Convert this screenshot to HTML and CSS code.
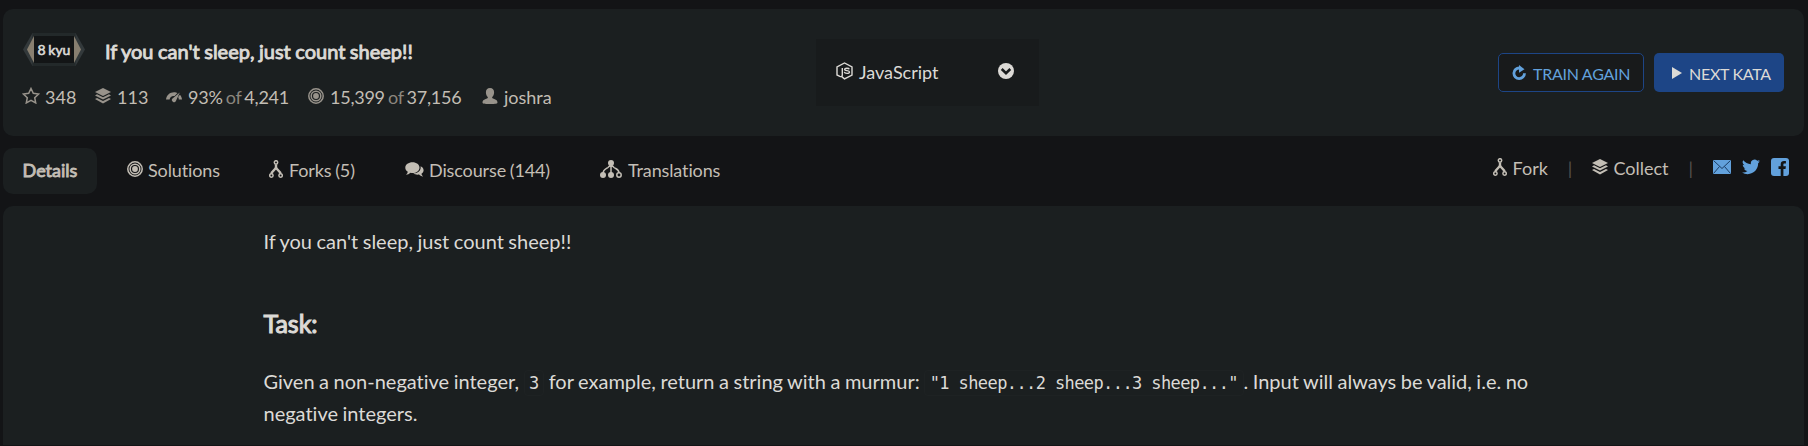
FILE: index.html
```html
<!DOCTYPE html>
<html lang="en">
<head>
<meta charset="utf-8">
<title>If you can't sleep, just count sheep!!</title>
<link rel="stylesheet" href="styles.css">
</head>
<body>
<svg class="defs" width="0" height="0">
  <symbol id="layers" viewBox="0 0 16 16"><path d="M8 0l8 4-8 4-8-4z"/><path d="M2 6.300L0 7.400l8 4 8-4-2-1.100-6 3z"/><path d="M2 9.900l-2 1.100 8 4.500 8-4.500-2-1.100-6 3.200z"/></symbol>
  <symbol id="target" viewBox="0 0 16 16"><g fill="none" stroke="currentColor" stroke-width="1.500"><circle cx="8" cy="8" r="7.200"/><circle cx="8" cy="8" r="4.800"/></g><circle cx="8" cy="8" r="2.900"/></symbol>
  <symbol id="fork" viewBox="0 0 14 18"><g fill="none" stroke="currentColor"><circle cx="7" cy="2.400" r="1.700" stroke-width="1.500"/><circle cx="2.400" cy="15.500" r="1.700" stroke-width="1.500"/><circle cx="11.600" cy="15.500" r="1.700" stroke-width="1.500"/><path stroke-width="2.400" d="M7 4.300v3.500M2.500 13.800c0-3 4.500-3.800 4.500-6.800c0 3 4.500 3.800 4.500 6.800"/></g></symbol>
</svg>
<header class="card">
  <div class="info">
    <div class="heading">
      <span class="rank"><svg class="hex" viewBox="0 0 62 33"><path fill="#33393b" d="M9.500 0H52.500L62 16.500 52.500 33H9.500L0 16.500z"/><path fill="#23292a" d="M9.500 0H52.500V33H9.500z"/><path fill="#887f70" d="M11 3H51L58 16.500 51 30H11L4 16.500z"/><path fill="#131516" d="M11 3h40v27H11z"/></svg><span class="kyu">8 kyu</span></span>
      <h1>If you can't sleep, just count sheep!!</h1>
    </div>
    <div class="stats">
      <span class="stat s1"><svg viewBox="0 0 18 17"><path fill="none" stroke="currentColor" stroke-width="1.500" d="M9 1.500l2.300 4.800 5.300.700-3.900 3.700 1 5.200L9 13.300l-4.700 2.600 1-5.200L1.400 7l5.300-.7z"/></svg>348</span>
      <span class="stat s2"><svg viewBox="0 0 16 16"><use href="#layers"/></svg>113</span>
      <span class="stat s3"><svg viewBox="0 0 16 12"><path d="M0 8.500C.5 4 4 1.200 8 1.200c1.500 0 2.500.3 3.500.8L8.600 5C6 4.500 4 6 3.600 8.500z"/><path d="M13.800 1.500L9.900 10A2.100 2.100 0 1 1 6.500 7.600zM13.900 3.700c1.200 1.200 2 3 2.100 4.800h-3.200c0-1-.3-1.700-.7-2.400z"/></svg><span>93% <i>of</i> 4,241</span></span>
      <span class="stat s4"><svg viewBox="0 0 16 16"><use href="#target"/></svg><span>15,399 <i>of</i> 37,156</span></span>
      <span class="stat s5"><svg viewBox="0 0 16 16"><path d="M8 0c2.700 0 4.100 1.800 4.100 4.300 0 2-.8 4-2 5 0 2 5.400 1.500 5.400 5.200 0 1-1.500 1.500-7.500 1.500S.5 15.500.5 14.500c0-3.700 5.400-3.200 5.400-5.200-1.200-1-2-3-2-5C3.900 1.800 5.300 0 8 0z"/></svg>joshra</span>
    </div>
  </div>
  <div class="language">
    <svg class="js" viewBox="0 0 17 18"><g fill="none" stroke="currentColor" stroke-width="1.400"><path d="M6 14.900L8.500 16.900 16 13V4.900L8.500 1 1 4.900V13l2.800 1.400c1.900.6 2.500-.2 2.500-1.400V6"/><path d="M13.300 7.200c-.6-1.300-4.700-1.300-4.700.2 0 1.800 4.900.7 4.900 2.700 0 1.700-4.800 1.700-5.200-.2"/></g></svg>
    <span class="langname">JavaScript</span>
    <svg class="chev" viewBox="0 0 16 16"><circle cx="8" cy="8" r="8"/><path fill="none" stroke="#181b1c" stroke-width="2.600" d="M3.700 6l4.300 4.200L12.300 6"/></svg>
  </div>
  <div class="actions">
    <a class="btn outline"><svg viewBox="0 0 14 15"><path fill="none" stroke="currentColor" stroke-width="2.800" d="M12.500 8.300A5.300 5.300 0 1 1 7.500 3"/><path d="M7 0l5.500 4.200-5.500 3.500z"/></svg>TRAIN AGAIN</a>
    <a class="btn solid"><svg viewBox="0 0 10 12"><path d="M0 0l10 6-10 6z"/></svg>NEXT KATA</a>
  </div>
</header>
<nav>
  <div class="tabs">
    <a class="tab active">Details</a>
    <a class="tab t2"><svg viewBox="0 0 16 16"><use href="#target"/></svg>Solutions</a>
    <a class="tab t3"><svg viewBox="0 0 14 18"><use href="#fork"/></svg>Forks (5)</a>
    <a class="tab t4"><svg viewBox="0 0 19 15"><path d="M7.500.3c4 0 7 2.400 7 5.400s-3 5.300-7 5.300q-1 0-2-.2Q3.500 12.600 1 12.700 2.700 11.200 2.800 9.700C1.200 8.700.3 7.300.3 5.700.3 2.700 3.500.3 7.500.3z"/><path d="M15.600 4.300c1.800.8 3 2.200 3 3.900 0 1.500-.8 2.700-2.100 3.500.1 1.100.6 1.900 1.700 2.700-1.900 0-3.200-.8-4.100-1.800-2 .3-4.200.1-5.800-1 4.500-.2 8-2.700 7.300-7.300z"/></svg>Discourse (144)</a>
    <a class="tab t5"><svg viewBox="0 0 22 18"><path fill="none" stroke="currentColor" stroke-width="1.500" d="M11 3v11M3 14C3 9 6 9 8 7.500L11 4.500l3 3c2 1.500 5 1.500 5 5.500"/><circle cx="11" cy="3" r="3"/><circle cx="3" cy="15" r="3"/><circle cx="11" cy="15" r="3"/><circle cx="19" cy="15" r="2.200" fill="none" stroke="currentColor" stroke-width="1.500"/></svg>Translations</a>
  </div>
  <div class="links">
    <a class="lfork"><svg viewBox="0 0 14 18"><use href="#fork"/></svg>Fork</a>
    <span class="bar">|</span>
    <a class="lcol"><svg viewBox="0 0 16 16"><use href="#layers"/></svg>Collect</a>
    <span class="bar">|</span>
    <span class="share">
      <svg width="18" height="14" viewBox="0 0 18 14"><path d="M0 0h18v14H0z"/><path fill="none" stroke="#1b3d63" stroke-width="1" d="M.5.500L9 8.500 17.500.5M.5 13.500l6-7M17.500 13.500l-6-7"/></svg>
      <svg width="18" height="16" viewBox="0 0 24 20"><path d="M24 2.400c-.9.400-1.800.7-2.800.8 1-.6 1.800-1.600 2.200-2.700-1 .6-2 1-3.100 1.200a4.900 4.900 0 0 0-8.400 4.500C7.700 6 4.100 4 1.700.9A4.900 4.900 0 0 0 3.200 7.500c-.8 0-1.600-.3-2.200-.6v.1c0 2.400 1.700 4.400 3.900 4.800-.7.200-1.500.2-2.200.1.600 2 2.400 3.400 4.600 3.400A9.900 9.900 0 0 1 0 17.300 14 14 0 0 0 7.500 19.500c9.100 0 14.300-7.700 14-14.600 1-.7 1.800-1.600 2.500-2.500z"/></svg>
      <svg width="18" height="18" viewBox="0 0 18 18"><path d="M3 0h12a3 3 0 0 1 3 3v12a3 3 0 0 1-3 3H3a3 3 0 0 1-3-3V3a3 3 0 0 1 3-3z"/><path fill="#131516" d="M9.700 18v-7H7.500V8.300h2.200V6.200c0-2.200 1.300-3.300 3.300-3.300h1.900v2.500h-1.300c-1 0-1.200.5-1.200 1.200v1.700h2.500l-.4 2.700h-2.100v7z"/></svg>
    </span>
  </div>
</nav>
<main>
  <div class="desc">
    <p>If you can't sleep, just count sheep!!</p>
    <h2>Task:</h2>
    <p>Given a non-negative integer, <code>3</code> for example, return a string with a murmur: <code>"1 sheep...2 sheep...3 sheep..."</code>. Input will always be valid, i.e. no negative integers.</p>
  </div>
</main>
</body>
</html>
```
FILE: styles.css
```css
* { box-sizing: border-box; }
body { margin: 0; padding: 9px 4px 1px 3px; height: 446px; overflow: hidden; background: #131416; color: #dcdad6; font: 18px/28px Lato, sans-serif; font-variant-ligatures: none; display: flex; flex-direction: column; }
svg { fill: currentColor; flex: none; display: block; }
.defs { position: absolute; }
h1, h2, p { margin: 0; }
.card { height: 127px; flex: none; background: #1b1f20; border-radius: 10px; display: grid; grid-template-columns: 813px 223px 1fr; }
.info { padding: 24px 0 0 20px; }
.heading { display: flex; height: 33px; align-items: center; }
.rank { display: grid; width: 62px; height: 33px; margin-right: 20px; }
.rank > * { grid-area: 1 / 1; }
.hex { width: 62px; height: 33px; }
.kyu { font-size: 14px; line-height: 33px; text-align: center; word-spacing: -1px; -webkit-text-stroke: .6px; }
h1 { font-size: 20px; font-weight: 400; -webkit-text-stroke: .9px; word-spacing: -.6px; line-height: 36px; padding-top: 3px; }
.stats { display: flex; margin-top: 17px; height: 28px; color: #c2bdb4; }
.stat { display: flex; align-items: center; white-space: nowrap; }
.stat svg { width: 16px; height: 16px; color: #98938b; margin: -2px 6px 0 0; }
.stat i { font-style: normal; color: #8b867e; }
.s1 { width: 72px; }
.s2 { width: 71px; }
.s3 { width: 142px; letter-spacing: -.25px; word-spacing: -1.2px; }
.s4 { width: 174px; letter-spacing: -.25px; word-spacing: -1.2px; }
.s1 svg { width: 18px; height: 17px; margin: -4px 5px 0 -1px; }
.s3 svg { height: 12px; margin-top: 0; }
.language { margin-top: 30px; height: 67px; background: #181b1c; display: flex; align-items: center; padding: 0 25px 3px 20px; }
.langname { padding-top: 2px; }
.js { width: 17px; height: 18px; margin: 0 6px 0 0; }
.chev { width: 16px; height: 16px; margin-left: auto; }
.actions { display: flex; justify-content: flex-end; gap: 10px; padding: 44px 20px 0 0; }
.btn { height: 39px; border-radius: 5px; display: flex; align-items: center; font-size: 16px; padding-top: 3px; letter-spacing: -.25px; word-spacing: -.2px; }
.btn svg { margin-top: -3px; }
.outline { width: 146px; border: 1px solid #1d4586; background: #181a1b; color: #62a1dc; padding-left: 13px; }
.outline svg { width: 14px; height: 15px; margin-right: 7px; }
.solid { width: 130px; background: #1d4586; padding-left: 18px; }
.solid svg { width: 10px; height: 12px; margin-right: 7px; }
nav { display: flex; justify-content: space-between; height: 70px; flex: none; color: #c3beb5; padding-top: 12px; }
.tabs { display: flex; height: 46px; letter-spacing: -.12px; word-spacing: -.8px; }
.tab { display: flex; align-items: center; padding-bottom: 2px; }
.tab svg { width: 16px; height: 16px; margin: -2px 5px 0 0; }
.active { width: 94px; border-radius: 10px; background: #1b1f20; justify-content: center; letter-spacing: 0; -webkit-text-stroke: .9px; }
.t2 { width: 142px; margin-left: 30px; }
.t3 { width: 136px; }
.t3 svg, .lfork svg { width: 14px; height: 18px; margin-right: 6px; }
.t4 { width: 195px; }
.t4 svg { width: 19px; height: 15px; }
.t5 svg { width: 22px; height: 18px; margin-right: 6px; }
.links { display: flex; padding: 6px 15px 0 0; height: 34px; }
.links a { display: flex; align-items: center; }
.links a svg { margin-top: -2px; }
.lcol svg { width: 16px; height: 16px; margin-right: 5px; }
.bar { color: #56534f; padding: 0 20px; }
.share { display: flex; align-items: center; gap: 11px; color: #62a1dc; margin-top: -2px; }
main { flex: 1; background: #1b1f20; border-radius: 10px 10px 0 0; padding: 19px 0 0 260.5px; }
.desc { width: 1280px; font-size: 20px; line-height: 32px; word-spacing: -.6px; }
h2 { font-size: 25px; line-height: 36px; font-weight: 400; -webkit-text-stroke: 1.1px; margin: 48px 0 24px; }
code { font: 17px/24px "DejaVu Sans Mono", monospace; letter-spacing: -.6px; word-spacing: 0; border: 1px solid #1e2223; border-radius: 4px; padding: 2px 4.5px; }
```
